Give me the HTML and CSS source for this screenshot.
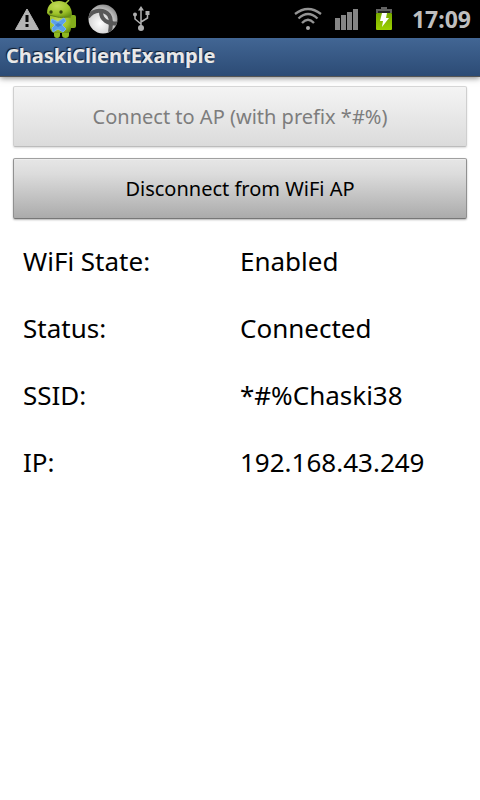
FILE: index.html
```html
<!DOCTYPE html>
<html lang="en">
<head>
<meta charset="utf-8">
<meta name="viewport" content="width=device-width, initial-scale=1">
<title>ChaskiClientExample</title>
<link rel="stylesheet" href="styles.css">
</head>
<body>
<div class="status-bar">
  <div class="notifications">
    <svg width="26" height="38" viewBox="0 0 26 38" role="img" aria-label="Warning">
      <path d="M13 9 L24.500 29.500 H1.500 Z" fill="#b5b5b5" stroke="#b5b5b5" stroke-linejoin="round"/>
      <path d="M11.500 15 h3 v7 h-3z M11.500 24 h3 v3 h-3z" fill="#080808"/>
    </svg>
    <svg width="32" height="38" viewBox="0 0 32 38" role="img" aria-label="Android">
      <defs>
        <radialGradient id="skin" cx=".4" cy=".3" r=".8"><stop offset="0" stop-color="#c2da58"/><stop offset=".6" stop-color="#9fc32a"/><stop offset="1" stop-color="#638c10"/></radialGradient>
      </defs>
      <path d="M8 4 L5 0 M19 4 L23 0" stroke="#a3c23c" stroke-width="1.500"/>
      <rect x="23" y="15" width="7" height="13" rx="2" fill="#84ae1c"/>
      <path d="M8 28 h6 v7 q0 3 -3 3 t-3 -3z M16 28 h7 v7 q0 3 -3.500 3 t-3.500 -3z" fill="#8fb820"/>
      <path d="M4 16 H25 V28 Q25 33 21 33 H9 Q5 33 4 28z" fill="url(#skin)"/>
      <path d="M1 13 C1 5 6 1 13 1 S26 6 26 15 Q24 18 13 17 Q2 16 1 13z" fill="url(#skin)"/>
      <path d="M3 15 Q13 19 25 17" fill="none" stroke="#63831b"/>
      <circle cx="5" cy="12" r="1.700" fill="#34420e"/><circle cx="15" cy="12" r="1.700" fill="#34420e"/>
      <path d="M6 19 L12 22 L18 18 L20 21 L16 25 L20 29 L17 32 L12 29 L7 32 L6 28 L9 25 L5 22z" fill="#5c9fe8" stroke="#78b4f2"/>
      <path d="M9 25 L12 23 L16 25 L12 27z" fill="#3f7fd0"/>
    </svg>
    <svg class="sphere" width="30" height="38" viewBox="0 0 30 38" role="img" aria-label="Globe">
      <defs>
        <radialGradient id="ball" cx=".4" cy=".65" r=".7"><stop offset="0" stop-color="#fff"/><stop offset=".6" stop-color="#d2d2d2"/><stop offset="1" stop-color="#888"/></radialGradient>
        <clipPath id="disc"><circle cx="15" cy="19" r="14.500"/></clipPath>
      </defs>
      <circle cx="15" cy="19" r="14.500" fill="url(#ball)"/>
      <g clip-path="url(#disc)" fill="none" stroke="#585858">
        <path d="M0 17 C6 9 16 9 21 15 C24 19 23 25 22 32" stroke-width="4"/>
        <path d="M13 12 C13 19 19 25 31 23" stroke-width="4"/>
      </g>
    </svg>
    <svg class="usb" width="20" height="38" viewBox="0 0 20 38" role="img" aria-label="USB connected">
      <g fill="none" stroke="#b0b0b0" stroke-width="1.500"><path d="M10 9 V28 M4 15 V19 L10 24 M16.500 14 V18 L10 22"/></g>
      <path d="M10 6 L13 10.500 H7z M14.500 11 h4 v4 h-4z" fill="#b0b0b0"/>
      <circle cx="4" cy="14.500" r="2" fill="#b0b0b0"/><circle cx="10" cy="28" r="3" fill="#b0b0b0"/>
    </svg>
  </div>
  <div class="system">
    <svg width="28" height="38" viewBox="0 0 28 38" role="img" aria-label="WiFi signal">
      <g fill="none" stroke="#949494" stroke-width="2.300"><path d="M1 14 Q14 4 27 14 M4.500 18.500 Q14 9.500 23.500 18.500 M8 23 Q14 16.500 20 23"/></g>
      <circle cx="14" cy="28" r="2" fill="#aaa"/>
    </svg>
    <svg class="signal" width="24" height="38" viewBox="0 0 24 38" role="img" aria-label="Mobile signal">
      <path d="M1 18 h5 v12 h-5z M7 15 h5 v15 h-5z M13 12 h5 v18 h-5z M19 9 h5 v21 h-5z" fill="#858585"/>
    </svg>
    <svg class="battery" width="18" height="38" viewBox="0 0 18 38" role="img" aria-label="Battery charging">
      <defs><linearGradient id="charge" x2="0" y2="1"><stop offset="0" stop-color="#78aa00"/><stop offset="1" stop-color="#9bd000"/></linearGradient></defs>
      <path d="M6 7 h6 v2 h5 v4 H1 V9 h5z" fill="#626262"/>
      <path d="M3 11 h12 v2 H3z" fill="#252525"/>
      <rect x="1" y="13" width="16" height="17" rx="1" fill="url(#charge)"/>
      <path d="M7 13 H12 L11 18 H14 L7 27 L8 21 H5z" fill="#fff"/>
    </svg>
    <time class="clock">17:09</time>
  </div>
</div>
<header class="title-bar"><h1>ChaskiClientExample</h1></header>
<main>
  <button type="button" disabled>Connect to AP (with prefix *#%)</button>
  <button type="button">Disconnect from WiFi AP</button>
  <dl>
    <dt>WiFi State:</dt><dd>Enabled</dd>
    <dt>Status:</dt><dd>Connected</dd>
    <dt>SSID:</dt><dd>*#%Chaski38</dd>
    <dt>IP:</dt><dd>192.168.43.249</dd>
  </dl>
</main>
</body>
</html>
```
FILE: styles.css
```css
* { box-sizing: border-box; }
body {
  margin: 0;
  background: #fff;
  color: #000;
  font-family: "Noto Sans", "Open Sans", sans-serif;
}
svg { display: block; flex: none; }
.status-bar {
  display: flex;
  justify-content: space-between;
  height: 38px;
  padding: 0 9px 0 14px;
  background: #000;
}
.notifications, .system { display: flex; align-items: center; }
.notifications { gap: 6px; }
.sphere { margin-left: 4px; }
.usb { margin-left: 7px; }
.signal { margin-left: 12px; }
.battery { margin-left: 17px; }
.clock {
  margin-left: 19px;
  color: #bebebe;
  font-size: 23px;
  font-weight: 700;
  line-height: 38px;
}
.title-bar {
  height: 39px;
  padding: 0 6px;
  background: linear-gradient(#426694, #2c4b75);
  border-bottom: 1px solid #555;
  box-shadow: 0 1px 6px rgba(0, 0, 0, .5);
}
h1 {
  margin: 0;
  color: #e8e8e8;
  font-size: 20px;
  font-weight: 700;
  line-height: 36px;
  text-shadow: -1px -1px 1px #101a28;
}
main {
  display: flex;
  flex-direction: column;
  gap: 11px;
  padding: 9px 13px;
}
button {
  height: 61px;
  padding: 0;
  border: 1px solid;
  border-color: #a0a0a0 #909090 #777;
  border-radius: 2px;
  background: linear-gradient(#e6e6e6, #dcdcdc 25%, #ababab);
  box-shadow: 0 1px 2px rgba(0, 0, 0, .3), inset 0 1px #eee;
  color: #000;
  font: 20px "Noto Sans", "Open Sans", sans-serif;
}
button:disabled {
  border-color: #d6d6d6 #cfcfcf #bcbcbc;
  background: linear-gradient(#f4f4f4, #eee 25%, #dbdbdb);
  box-shadow: 0 1px 2px rgba(0, 0, 0, .15);
  color: #7d7d7d;
}
dl {
  display: grid;
  grid-template-columns: 1fr 1fr;
  row-gap: 4px;
  margin: 0;
  padding: 0 10px;
  font-size: 26px;
  line-height: 63px;
}
dt, dd { margin: 0; }
```
